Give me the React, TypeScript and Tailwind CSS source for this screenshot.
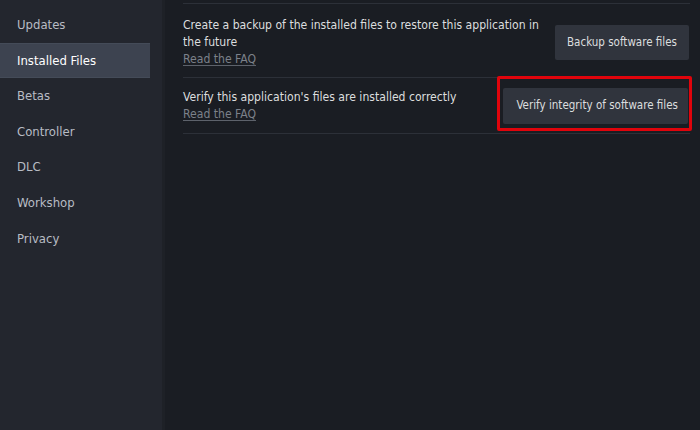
const navItems = [
  "Updates",
  "Installed Files",
  "Betas",
  "Controller",
  "DLC",
  "Workshop",
  "Privacy",
];

const font = { fontFamily: "'DejaVu Sans Condensed', 'DejaVu Sans', sans-serif", fontStretch: "condensed" };

export default function App() {
  const active = "Installed Files";

  return (
    <div className="flex w-[700px] h-[430px] bg-[#1a1d23] overflow-hidden" style={font}>
      {/* sidebar */}
      <div className="w-[165px] h-full shrink-0 bg-[#23262e] border-r-[3px] border-[#1e2127] pt-[7px] pr-3">
        {navItems.map((item) => (
          <div
            key={item}
            className={`h-[35.6px] flex items-center pl-[17px] text-[13px] ${
              item === active
                ? "bg-[#3d4350] text-white border-y border-[#444b58]"
                : "text-[#b8bcc4]"
            }`}
          >
            {item}
          </div>
        ))}
      </div>

      {/* main */}
      <div className="flex-1 pl-[18px] pr-[10px] pt-[3px]">
        <div className="border-t border-[#2c3038]">
          <div className="flex items-center gap-3 pt-[13px] pb-[9px] border-b border-[#2c3038]">
            <div className="flex-1 text-[12.1px] leading-[17px] text-[#dcdedf]">
              <p>Create a backup of the installed files to restore this application in the future</p>
              <a className="text-[#7c818a] underline underline-offset-2 decoration-[#5d626b]">Read the FAQ</a>
            </div>
            <button className="h-[35px] px-3 mr-[1px] bg-[#30343d] text-[#dcdedf] text-[11.5px] rounded-[2px] shrink-0">
              Backup software files
            </button>
          </div>
          <div className="flex items-center gap-3 pt-[10px] pb-[9px] border-b border-[#2c3038]">
            <div className="flex-1 text-[12.1px] leading-[17px] text-[#dcdedf]">
              <p>Verify this application's files are installed correctly</p>
              <a className="text-[#7c818a] underline underline-offset-2 decoration-[#5d626b]">Read the FAQ</a>
            </div>
            <div className="relative shrink-0 mr-[2px]">
              <button className="h-[36px] pl-[13px] pr-[10px] bg-[#30343d] text-[#dcdedf] text-[11.5px] rounded-[2px]">
                Verify integrity of software files
              </button>
              <div className="absolute -left-[6px] -top-[12px] -right-[4px] -bottom-[7px] border-[3px] border-[#e0040c] rounded-[2px] pointer-events-none" />
            </div>
          </div>
        </div>
      </div>
    </div>
  );
}
